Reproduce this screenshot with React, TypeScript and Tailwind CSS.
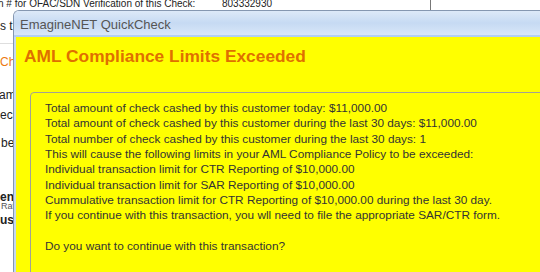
const messageLines = [
  "Total amount of check cashed by this customer today: $11,000.00",
  "Total amount of check cashed by this customer during the last 30 days: $11,000.00",
  "Total number of check cashed by this customer during the last 30 days: 1",
  "This will cause the following limits in your AML Compliance Policy to be exceeded:",
  "Individual transaction limit for CTR Reporting of $10,000.00",
  "Individual transaction limit for SAR Reporting of $10,000.00",
  "Cummulative transaction limit for CTR Reporting of $10,000.00 during the last 30 day.",
  "If you continue with this transaction, you wll need to file the appropriate SAR/CTR form.",
  "",
  "Do you want to continue with this transaction?",
];

function PageBehind() {
  return (
    <div className="flex flex-col text-[#222]">
      {/* top row of the check form, cut off by the window edge */}
      <div className="flex h-[10px] items-end overflow-hidden text-[10px] leading-[12px]">
        <div className="-ml-[2px] w-[224px] shrink-0 whitespace-nowrap">
          n # for OFAC/SDN Verification of this Check:
        </div>
        <div className="w-[208px] shrink-0">803332930</div>
        <div className="h-full flex-1 border-l border-[#777]" />
      </div>

      {/* labels of the form, mostly hidden behind the dialog */}
      <div className="flex w-[13px] flex-col overflow-hidden whitespace-nowrap text-[12px]">
        <div className="mt-[9px] leading-[14px]">s transaction</div>
        <div className="mt-[10px] h-px w-full bg-[#dedede]" />
        <div className="mt-[11px] leading-[14px] text-[#ec7a12]">Check</div>
        <div className="mt-[19px] -ml-[1px] leading-[14px]">ame</div>
        <div className="mt-[6px] leading-[14px]">eck</div>
        <div className="mt-[14px] ml-[1px] leading-[14px]">ber</div>
        <div className="mt-[42px] font-bold leading-[10px]">en Rate</div>
        <div className="ml-[1px] text-[9px] leading-[9px] text-[#555]">Rate</div>
        <div className="mt-[3px] font-bold leading-[12px]">ust</div>
      </div>
    </div>
  );
}

function QuickCheckWindow() {
  return (
    <div className="absolute left-[13px] top-[10px] flex h-[300px] w-[560px] flex-col overflow-hidden rounded-tl-[6px] border-l border-t border-[#8597b1]">
      <div className="flex h-[24px] shrink-0 items-center bg-linear-to-b from-[#dde9f8] via-[#c6daf3] to-[#d9e7f8] pl-[6px] pt-[3px] text-[13px] text-[#555]">
        EmagineNET QuickCheck
      </div>
      <div className="h-[2px] shrink-0 bg-[#b3cff1]" />
      <div className="flex flex-1">
        <div className="w-[2px] shrink-0 bg-[#c4d8f1]" />
        <div className="flex flex-1 flex-col bg-[#ffff00]">
          <h1 className="ml-[8px] mt-[9px] text-[17.33px] font-bold leading-[20px] text-[#df7000]">
            AML Compliance Limits Exceeded
          </h1>
          <div className="ml-[14px] mt-[26px] flex-1 rounded-[4px] border border-[#a2a294] pl-[14px] pt-[8px] text-[11.8px] leading-[15.33px] text-[#333]">
            {messageLines.map((line, i) => (
              <div key={i} className="h-[15.33px] whitespace-nowrap">
                {line}
              </div>
            ))}
          </div>
        </div>
      </div>
    </div>
  );
}

export default function App() {
  return (
    <div className="relative h-[272px] w-[540px] overflow-hidden bg-white font-['Liberation_Sans',Arial,sans-serif]">
      <PageBehind />
      <QuickCheckWindow />
    </div>
  );
}
